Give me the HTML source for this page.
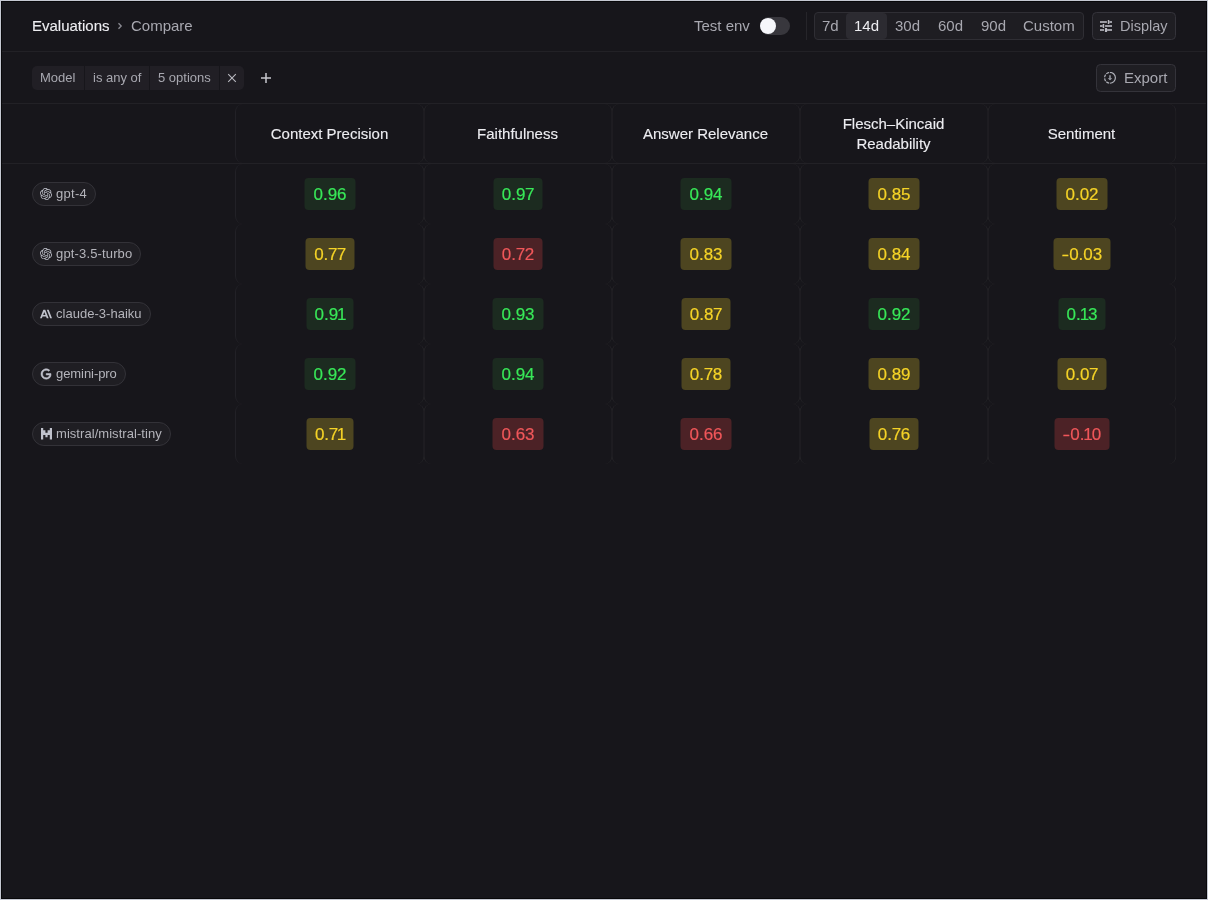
<!DOCTYPE html>
<html>
<head>
<meta charset="utf-8">
<style>
*{box-sizing:border-box;margin:0;padding:0}
html,body{width:1208px;height:900px;overflow:hidden;background:#c5c8d2}
body{font-family:"Liberation Sans",sans-serif;position:relative}
#frame{will-change:transform;position:absolute;left:1px;top:1px;width:1206px;height:898px;border:1px solid #08080a;background:#17161b;overflow:hidden}
.abs{position:absolute}
.t{position:absolute;white-space:nowrap;line-height:22px}
.hi{color:#ededf1;-webkit-text-stroke:0.12px #ededf1}
.lo{color:#a8a8b0}
.wh{color:#ededf1}
.hline{position:absolute;left:0;width:1206px;height:1px;background:#222126}
.bx{border:1px solid #34333a;border-radius:4.5px;background:#1f1e23}
.cell{position:absolute;width:189px;display:flex;align-items:center;justify-content:center}
.bl,.br{position:absolute;width:189px;border-radius:8px;pointer-events:none}
.bl{border-left:1px solid #242327}
.br{border-right:1px solid #242327}
.bl.c{border-left-color:#222127}
.hd{font-size:15px;color:#ededf1;-webkit-text-stroke:0.12px #ededf1;text-align:center;line-height:20px}
.chip{position:absolute;height:24px;border:1px solid #333238;border-radius:12px;background:#1f1e23;display:flex;align-items:center;padding:0 8px 0 7px;font-size:13px;color:#b4b4bb;white-space:nowrap}
.chip .ic{width:12px;height:12px;margin-right:4px;color:#c0c2cc;flex:none}
.bd{display:block;height:32px;line-height:34px;padding:0 8.5px;border-radius:4px;font-size:17px;font-weight:normal;-webkit-text-stroke:0.2px currentColor;transform:translateX(0.5px)}
.mi{display:inline-block;transform:scaleX(1.35);margin:0 1px 0 0.7px}
.bd.g{background:#1c2b20;color:#38e858}
.bd.y{background:#4d4520;color:#f5d327}
.bd.r{background:#4c2226;color:#f0575a}
</style>
</head>
<body>
<div id="frame">
<div class="t hi" style="left:30px;top:13px;font-size:15px">Evaluations</div>
<svg class="abs" style="left:114px;top:19px" width="8" height="10" viewBox="0 0 8 10"><path d="M2.5 2.2L5.2 5L2.5 7.8" fill="none" stroke="#8c8c94" stroke-width="1.3"/></svg>
<div class="t lo" style="left:129px;top:13px;font-size:15px">Compare</div>
<div class="t lo" style="left:692px;top:13px;font-size:15px">Test env</div>
<div class="abs" style="left:758px;top:15px;width:30px;height:18px;border-radius:9px;background:#38373d"></div>
<div class="abs" style="left:758px;top:16px;width:16px;height:16px;border-radius:8px;background:#f6f7fb"></div>
<div class="abs" style="left:804px;top:10px;width:1px;height:28px;background:#26252a"></div>
<div class="abs" style="left:812px;top:10px;width:270px;height:28px;border:1px solid #2f2e34;border-radius:4px;background:#1e1d22"></div>
<div class="abs" style="left:844px;top:11px;width:41px;height:26px;border-radius:4px;background:#2c2b31"></div>
<div class="t lo" style="left:820px;top:13px;font-size:15px">7d</div>
<div class="t wh" style="left:852px;top:13px;font-size:15px">14d</div>
<div class="t lo" style="left:893px;top:13px;font-size:15px">30d</div>
<div class="t lo" style="left:936px;top:13px;font-size:15px">60d</div>
<div class="t lo" style="left:979px;top:13px;font-size:15px">90d</div>
<div class="t lo" style="left:1021px;top:13px;font-size:15px">Custom</div>
<div class="abs bx" style="left:1090px;top:10px;width:84px;height:28px"></div>
<svg class="abs" style="left:1098px;top:18px" width="12" height="12" viewBox="0 0 12 12"><g fill="#9c9ca4"><rect x="0" y="1" width="6.9" height="2"/><rect x="9.3" y="1" width="2.7" height="2"/><rect x="0" y="5" width="2.7" height="2"/><rect x="5.1" y="5" width="6.9" height="2"/><rect x="0" y="9" width="4" height="2"/><rect x="7.1" y="9" width="4.9" height="2"/></g><g fill="#babac2"><path d="M7.8 0h1.5v4H7.8z"/><path d="M2.7 4h1.5v4H2.7z"/><path d="M4.9 8h2.2v4H4.9z"/></g></svg>
<div class="t lo" style="left:1118px;top:13px;font-size:14.5px">Display</div>
<div class="hline" style="top:49px"></div>
<div class="abs" style="left:30px;top:64px;width:52px;height:24px;background:#211f25;border-radius:5px 0 0 5px"></div>
<div class="abs" style="left:83px;top:64px;width:64px;height:24px;background:#211f25;"></div>
<div class="abs" style="left:148px;top:64px;width:69px;height:24px;background:#211f25;"></div>
<div class="abs" style="left:218px;top:64px;width:24px;height:24px;background:#211f25;border-radius:0 5px 5px 0"></div>
<div class="t lo" style="left:38px;top:67px;font-size:13px;line-height:18px">Model</div>
<div class="t lo" style="left:91px;top:67px;font-size:13px;line-height:18px">is any of</div>
<div class="t lo" style="left:156px;top:67px;font-size:13px;line-height:18px">5 options</div>
<svg class="abs" style="left:225px;top:71px" width="10" height="10" viewBox="0 0 10 10"><path d="M1.2 1.2L8.8 8.8M8.8 1.2L1.2 8.8" stroke="#b9b9c0" stroke-width="1.1"/></svg>
<svg class="abs" style="left:258px;top:70px" width="12" height="12" viewBox="0 0 12 12"><path d="M6 1v10M1 6h10" stroke="#c8c8ce" stroke-width="1.5"/></svg>
<div class="abs bx" style="left:1094px;top:62px;width:80px;height:28px"></div>
<svg class="abs" style="left:1102px;top:70px" width="12" height="12" viewBox="0 0 12 12"><g fill="none" stroke="#aeb0b8" stroke-width="1.2"><path d="M6 0.45A5.4 5.4 0 0 1 6 11.25"/><path d="M5.2 0.5A5.4 5.4 0 0 0 2.3 1.9M1.6 2.6A5.4 5.4 0 0 0 0.6 5.3M0.65 6.4A5.4 5.4 0 0 0 1.6 9.1M2.3 9.8A5.4 5.4 0 0 0 5.2 11.2"/></g><path d="M5.35 3.3h1.3v3h-1.3z" fill="#aeb0b8"/><path d="M3.8 6.2h4.4L6 8.3z" fill="#aeb0b8"/></svg>
<div class="t lo" style="left:1122px;top:65px;font-size:15px">Export</div>
<div class="hline" style="top:101px"></div>
<div class="hline" style="top:161px"></div>
<div class="cell hd" style="left:233px;top:102px;height:59px"><span>Context Precision</span></div>
<div class="cell hd" style="left:421px;top:102px;height:59px"><span>Faithfulness</span></div>
<div class="cell hd" style="left:609px;top:102px;height:59px"><span>Answer Relevance</span></div>
<div class="cell hd" style="left:797px;top:102px;height:59px"><span>Flesch&#8211;Kincaid<br>Readability</span></div>
<div class="cell hd" style="left:985px;top:102px;height:59px"><span>Sentiment</span></div>
<div class="chip" style="left:30px;top:180px"><svg class="ic" viewBox="0 0 24 24"><path fill="currentColor" d="M22.2819 9.8211a5.9847 5.9847 0 0 0-.5157-4.9108 6.0462 6.0462 0 0 0-6.5098-2.9A6.0651 6.0651 0 0 0 4.9807 4.1818a5.9847 5.9847 0 0 0-3.9977 2.9 6.0462 6.0462 0 0 0 .7427 7.0966 5.98 5.98 0 0 0 .511 4.9107 6.051 6.051 0 0 0 6.5146 2.9001A5.9847 5.9847 0 0 0 13.2599 24a6.0557 6.0557 0 0 0 5.7718-4.2058 5.9894 5.9894 0 0 0 3.9977-2.9001 6.0557 6.0557 0 0 0-.7475-7.0729zm-9.022 12.6081a4.4755 4.4755 0 0 1-2.8764-1.0408l.1419-.0804 4.7783-2.7582a.7948.7948 0 0 0 .3927-.6813v-6.7369l2.02 1.1686a.071.071 0 0 1 .038.052v5.5826a4.504 4.504 0 0 1-4.4945 4.4944zm-9.6607-4.1254a4.4708 4.4708 0 0 1-.5346-3.0137l.142.0852 4.783 2.7582a.7712.7712 0 0 0 .7806 0l5.8428-3.3685v2.3324a.0804.0804 0 0 1-.0332.0615L9.74 19.9502a4.4992 4.4992 0 0 1-6.1408-1.6464zM2.3408 7.8956a4.485 4.485 0 0 1 2.3655-1.9728V11.6a.7664.7664 0 0 0 .3879.6765l5.8144 3.3543-2.0201 1.1685a.0757.0757 0 0 1-.071 0l-4.8303-2.7865A4.504 4.504 0 0 1 2.3408 7.872zm16.5963 3.8558L13.1038 8.364 15.1192 7.2a.0757.0757 0 0 1 .071 0l4.8303 2.7913a4.4944 4.4944 0 0 1-.6765 8.1042v-5.6772a.79.79 0 0 0-.407-.667zm2.0107-3.0231l-.142-.0852-4.7735-2.7818a.7759.7759 0 0 0-.7854 0L9.409 9.2297V6.8974a.0662.0662 0 0 1 .0284-.0615l4.8303-2.7866a4.4992 4.4992 0 0 1 6.6802 4.66zM8.3065 12.863l-2.02-1.1638a.0804.0804 0 0 1-.038-.0567V6.0742a4.4992 4.4992 0 0 1 7.3757-3.4537l-.142.0805L8.704 5.459a.7948.7948 0 0 0-.3927.6813zm1.0976-2.3654l2.602-1.4998 2.6069 1.4998v2.9994l-2.5974 1.4997-2.6067-1.4997Z"/></svg><span style="letter-spacing:0.28px;position:relative;top:-1px">gpt-4</span></div>
<div class="cell" style="left:233px;top:162px;height:60px"><b class="bd g">0.96</b></div>
<div class="cell" style="left:421px;top:162px;height:60px"><b class="bd g">0.9<span style="margin:0 -0.35px">7</span></b></div>
<div class="cell" style="left:609px;top:162px;height:60px"><b class="bd g">0.94</b></div>
<div class="cell" style="left:797px;top:162px;height:60px"><b class="bd y">0.85</b></div>
<div class="cell" style="left:985px;top:162px;height:60px"><b class="bd y">0.02</b></div>
<div class="chip" style="left:30px;top:240px"><svg class="ic" viewBox="0 0 24 24"><path fill="currentColor" d="M22.2819 9.8211a5.9847 5.9847 0 0 0-.5157-4.9108 6.0462 6.0462 0 0 0-6.5098-2.9A6.0651 6.0651 0 0 0 4.9807 4.1818a5.9847 5.9847 0 0 0-3.9977 2.9 6.0462 6.0462 0 0 0 .7427 7.0966 5.98 5.98 0 0 0 .511 4.9107 6.051 6.051 0 0 0 6.5146 2.9001A5.9847 5.9847 0 0 0 13.2599 24a6.0557 6.0557 0 0 0 5.7718-4.2058 5.9894 5.9894 0 0 0 3.9977-2.9001 6.0557 6.0557 0 0 0-.7475-7.0729zm-9.022 12.6081a4.4755 4.4755 0 0 1-2.8764-1.0408l.1419-.0804 4.7783-2.7582a.7948.7948 0 0 0 .3927-.6813v-6.7369l2.02 1.1686a.071.071 0 0 1 .038.052v5.5826a4.504 4.504 0 0 1-4.4945 4.4944zm-9.6607-4.1254a4.4708 4.4708 0 0 1-.5346-3.0137l.142.0852 4.783 2.7582a.7712.7712 0 0 0 .7806 0l5.8428-3.3685v2.3324a.0804.0804 0 0 1-.0332.0615L9.74 19.9502a4.4992 4.4992 0 0 1-6.1408-1.6464zM2.3408 7.8956a4.485 4.485 0 0 1 2.3655-1.9728V11.6a.7664.7664 0 0 0 .3879.6765l5.8144 3.3543-2.0201 1.1685a.0757.0757 0 0 1-.071 0l-4.8303-2.7865A4.504 4.504 0 0 1 2.3408 7.872zm16.5963 3.8558L13.1038 8.364 15.1192 7.2a.0757.0757 0 0 1 .071 0l4.8303 2.7913a4.4944 4.4944 0 0 1-.6765 8.1042v-5.6772a.79.79 0 0 0-.407-.667zm2.0107-3.0231l-.142-.0852-4.7735-2.7818a.7759.7759 0 0 0-.7854 0L9.409 9.2297V6.8974a.0662.0662 0 0 1 .0284-.0615l4.8303-2.7866a4.4992 4.4992 0 0 1 6.6802 4.66zM8.3065 12.863l-2.02-1.1638a.0804.0804 0 0 1-.038-.0567V6.0742a4.4992 4.4992 0 0 1 7.3757-3.4537l-.142.0805L8.704 5.459a.7948.7948 0 0 0-.3927.6813zm1.0976-2.3654l2.602-1.4998 2.6069 1.4998v2.9994l-2.5974 1.4997-2.6067-1.4997Z"/></svg><span style="letter-spacing:0.15px;position:relative;top:-1px">gpt-3.5-turbo</span></div>
<div class="cell" style="left:233px;top:222px;height:60px"><b class="bd y">0.<span style="margin:0 -0.35px">7</span><span style="margin:0 -0.35px">7</span></b></div>
<div class="cell" style="left:421px;top:222px;height:60px"><b class="bd r">0.<span style="margin:0 -0.35px">7</span>2</b></div>
<div class="cell" style="left:609px;top:222px;height:60px"><b class="bd y">0.83</b></div>
<div class="cell" style="left:797px;top:222px;height:60px"><b class="bd y">0.84</b></div>
<div class="cell" style="left:985px;top:222px;height:60px"><b class="bd y"><span class=mi>-</span>0.03</b></div>
<div class="chip" style="left:30px;top:300px"><svg class="ic" viewBox="0 0 24 24"><path fill="currentColor" d="M17.3041 3.541h-3.6718l6.696 16.918H24Zm-10.6082 0L0 20.459h3.7442l1.3693-3.5527h7.0052l1.3693 3.5528h3.7442L10.5363 3.5409Zm-.3712 10.2232 2.2914-5.9456 2.2914 5.9456Z"/></svg><span style="letter-spacing:0.02px;position:relative;top:-1px">claude-3-haiku</span></div>
<div class="cell" style="left:233px;top:282px;height:60px"><b class="bd g">0.9<span style="margin:0 -1.1px">1</span></b></div>
<div class="cell" style="left:421px;top:282px;height:60px"><b class="bd g">0.93</b></div>
<div class="cell" style="left:609px;top:282px;height:60px"><b class="bd y">0.8<span style="margin:0 -0.35px">7</span></b></div>
<div class="cell" style="left:797px;top:282px;height:60px"><b class="bd g">0.92</b></div>
<div class="cell" style="left:985px;top:282px;height:60px"><b class="bd g">0.<span style="margin:0 -1.1px">1</span>3</b></div>
<div class="chip" style="left:30px;top:360px"><svg class="ic" viewBox="-2 -2 28 28"><path fill="currentColor" stroke="currentColor" stroke-width="1.3" d="M12.48 10.92v3.28h7.84c-.24 1.84-.853 3.187-1.787 4.133-1.147 1.147-2.933 2.4-6.053 2.4-4.827 0-8.6-3.893-8.6-8.72s3.773-8.72 8.6-8.72c2.6 0 4.507 1.027 5.907 2.347l2.307-2.307C18.747 1.44 16.133 0 12.48 0 5.867 0 .307 5.387.307 12s5.56 12 12.173 12c3.573 0 6.267-1.173 8.373-3.36 2.16-2.16 2.84-5.213 2.84-7.667 0-.76-.053-1.467-.173-2.053H12.48z"/></svg><span style="letter-spacing:-0.07px;position:relative;top:-1px">gemini-pro</span></div>
<div class="cell" style="left:233px;top:342px;height:60px"><b class="bd g">0.92</b></div>
<div class="cell" style="left:421px;top:342px;height:60px"><b class="bd g">0.94</b></div>
<div class="cell" style="left:609px;top:342px;height:60px"><b class="bd y">0.<span style="margin:0 -0.35px">7</span>8</b></div>
<div class="cell" style="left:797px;top:342px;height:60px"><b class="bd y">0.89</b></div>
<div class="cell" style="left:985px;top:342px;height:60px"><b class="bd y">0.0<span style="margin:0 -0.35px">7</span></b></div>
<div class="chip" style="left:30px;top:420px"><svg class="ic" viewBox="0 0 5 5" preserveAspectRatio="none" style="width:11px;height:11.6px;margin-left:1px"><path fill="currentColor" d="M0 0h1v5H0zM4 0h1v5H4zM1 1h1v1H1zM3 1h1v1H3zM1 2h3v1H1zM2 3h1v1H2z"/></svg><span style="letter-spacing:0.05px;position:relative;top:-1px">mistral/mistral-tiny</span></div>
<div class="cell" style="left:233px;top:402px;height:60px"><b class="bd y">0.<span style="margin:0 -0.35px">7</span><span style="margin:0 -1.1px">1</span></b></div>
<div class="cell" style="left:421px;top:402px;height:60px"><b class="bd r">0.63</b></div>
<div class="cell" style="left:609px;top:402px;height:60px"><b class="bd r">0.66</b></div>
<div class="cell" style="left:797px;top:402px;height:60px"><b class="bd y">0.<span style="margin:0 -0.35px">7</span>6</b></div>
<div class="cell" style="left:985px;top:402px;height:60px"><b class="bd r"><span class=mi>-</span>0.<span style="margin:0 -1.1px">1</span>0</b></div>
<div class="bl c" style="left:233px;top:102px;height:59px;transform:translateX(0px)"></div>
<div class="br" style="left:233px;top:102px;height:59px;transform:translateX(0.5px)"></div>
<div class="bl" style="left:421px;top:102px;height:59px;transform:translateX(0.5px)"></div>
<div class="br" style="left:421px;top:102px;height:59px;transform:translateX(0.5px)"></div>
<div class="bl" style="left:609px;top:102px;height:59px;transform:translateX(0.5px)"></div>
<div class="br" style="left:609px;top:102px;height:59px;transform:translateX(0.5px)"></div>
<div class="bl" style="left:797px;top:102px;height:59px;transform:translateX(0.5px)"></div>
<div class="br" style="left:797px;top:102px;height:59px;transform:translateX(0.5px)"></div>
<div class="bl" style="left:985px;top:102px;height:59px;transform:translateX(0.5px)"></div>
<div class="br" style="left:985px;top:102px;height:59px;transform:translateX(0.5px)"></div>
<div class="bl c" style="left:233px;top:162px;height:60px;transform:translateX(0px)"></div>
<div class="br" style="left:233px;top:162px;height:60px;transform:translateX(0.5px)"></div>
<div class="bl" style="left:421px;top:162px;height:60px;transform:translateX(0.5px)"></div>
<div class="br" style="left:421px;top:162px;height:60px;transform:translateX(0.5px)"></div>
<div class="bl" style="left:609px;top:162px;height:60px;transform:translateX(0.5px)"></div>
<div class="br" style="left:609px;top:162px;height:60px;transform:translateX(0.5px)"></div>
<div class="bl" style="left:797px;top:162px;height:60px;transform:translateX(0.5px)"></div>
<div class="br" style="left:797px;top:162px;height:60px;transform:translateX(0.5px)"></div>
<div class="bl" style="left:985px;top:162px;height:60px;transform:translateX(0.5px)"></div>
<div class="br" style="left:985px;top:162px;height:60px;transform:translateX(0.5px)"></div>
<div class="bl c" style="left:233px;top:222px;height:60px;transform:translateX(0px)"></div>
<div class="br" style="left:233px;top:222px;height:60px;transform:translateX(0.5px)"></div>
<div class="bl" style="left:421px;top:222px;height:60px;transform:translateX(0.5px)"></div>
<div class="br" style="left:421px;top:222px;height:60px;transform:translateX(0.5px)"></div>
<div class="bl" style="left:609px;top:222px;height:60px;transform:translateX(0.5px)"></div>
<div class="br" style="left:609px;top:222px;height:60px;transform:translateX(0.5px)"></div>
<div class="bl" style="left:797px;top:222px;height:60px;transform:translateX(0.5px)"></div>
<div class="br" style="left:797px;top:222px;height:60px;transform:translateX(0.5px)"></div>
<div class="bl" style="left:985px;top:222px;height:60px;transform:translateX(0.5px)"></div>
<div class="br" style="left:985px;top:222px;height:60px;transform:translateX(0.5px)"></div>
<div class="bl c" style="left:233px;top:282px;height:60px;transform:translateX(0px)"></div>
<div class="br" style="left:233px;top:282px;height:60px;transform:translateX(0.5px)"></div>
<div class="bl" style="left:421px;top:282px;height:60px;transform:translateX(0.5px)"></div>
<div class="br" style="left:421px;top:282px;height:60px;transform:translateX(0.5px)"></div>
<div class="bl" style="left:609px;top:282px;height:60px;transform:translateX(0.5px)"></div>
<div class="br" style="left:609px;top:282px;height:60px;transform:translateX(0.5px)"></div>
<div class="bl" style="left:797px;top:282px;height:60px;transform:translateX(0.5px)"></div>
<div class="br" style="left:797px;top:282px;height:60px;transform:translateX(0.5px)"></div>
<div class="bl" style="left:985px;top:282px;height:60px;transform:translateX(0.5px)"></div>
<div class="br" style="left:985px;top:282px;height:60px;transform:translateX(0.5px)"></div>
<div class="bl c" style="left:233px;top:342px;height:60px;transform:translateX(0px)"></div>
<div class="br" style="left:233px;top:342px;height:60px;transform:translateX(0.5px)"></div>
<div class="bl" style="left:421px;top:342px;height:60px;transform:translateX(0.5px)"></div>
<div class="br" style="left:421px;top:342px;height:60px;transform:translateX(0.5px)"></div>
<div class="bl" style="left:609px;top:342px;height:60px;transform:translateX(0.5px)"></div>
<div class="br" style="left:609px;top:342px;height:60px;transform:translateX(0.5px)"></div>
<div class="bl" style="left:797px;top:342px;height:60px;transform:translateX(0.5px)"></div>
<div class="br" style="left:797px;top:342px;height:60px;transform:translateX(0.5px)"></div>
<div class="bl" style="left:985px;top:342px;height:60px;transform:translateX(0.5px)"></div>
<div class="br" style="left:985px;top:342px;height:60px;transform:translateX(0.5px)"></div>
<div class="bl c" style="left:233px;top:402px;height:60px;transform:translateX(0px)"></div>
<div class="br" style="left:233px;top:402px;height:60px;transform:translateX(0.5px)"></div>
<div class="bl" style="left:421px;top:402px;height:60px;transform:translateX(0.5px)"></div>
<div class="br" style="left:421px;top:402px;height:60px;transform:translateX(0.5px)"></div>
<div class="bl" style="left:609px;top:402px;height:60px;transform:translateX(0.5px)"></div>
<div class="br" style="left:609px;top:402px;height:60px;transform:translateX(0.5px)"></div>
<div class="bl" style="left:797px;top:402px;height:60px;transform:translateX(0.5px)"></div>
<div class="br" style="left:797px;top:402px;height:60px;transform:translateX(0.5px)"></div>
<div class="bl" style="left:985px;top:402px;height:60px;transform:translateX(0.5px)"></div>
<div class="br" style="left:985px;top:402px;height:60px;transform:translateX(0.5px)"></div>
</div>
</body>
</html>
